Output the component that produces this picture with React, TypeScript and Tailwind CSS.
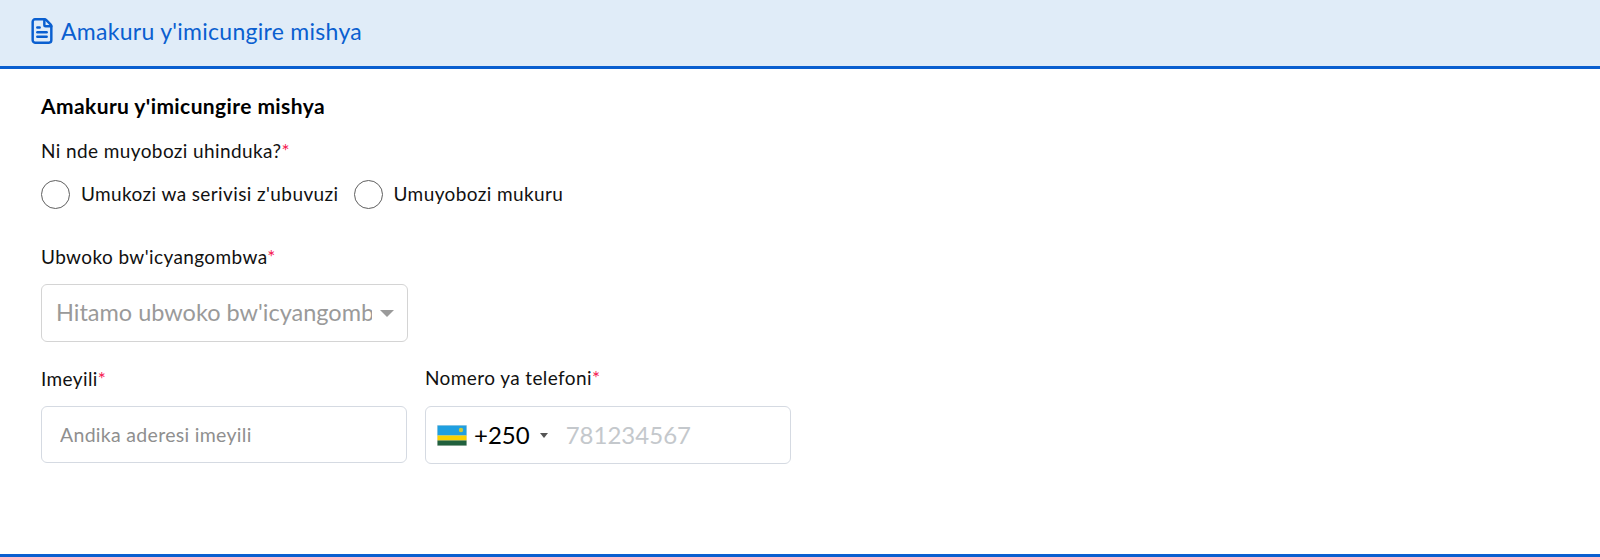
import { FileText } from "lucide-react";

function Required() {
  return <span className="text-[#f5164f]">*</span>;
}

function RwandaFlag() {
  return (
    <svg width="30" height="21" viewBox="0 0 30 21" className="shrink-0">
      <rect width="30" height="21" fill="#e5e5e5" />
      <rect x="0.5" y="0.5" width="29" height="10" fill="#1f9fe0" />
      <rect x="0.5" y="10.5" width="29" height="5" fill="#fad201" />
      <rect x="0.5" y="15.5" width="29" height="5" fill="#20603d" />
      <circle cx="24" cy="5" r="2.2" fill="#c9c93a" />
    </svg>
  );
}

function Radio({ label }: { label: string }) {
  return (
    <label className="flex items-center gap-[11px]">
      <span className="size-[29px] rounded-full border border-[#5f5f5f] bg-white" />
      <span>{label}</span>
    </label>
  );
}

export default function App() {
  return (
    <div
      className="h-[557px] flex flex-col bg-white text-[#111] text-[19px] tracking-[0.4px]"
      style={{ fontFamily: "Lato, 'Noto Sans', sans-serif" }}
    >
      {/* Header */}
      <header className="h-[69px] shrink-0 flex items-center gap-[5px] pl-[28px] pb-[4px] bg-[#e0ecf8] border-b-[3px] border-[#0a5fd0] text-[#0a5fd0]">
        <FileText size={28} strokeWidth={2.1} />
        <h1 className="text-[23px] leading-none tracking-[0.28px]">Amakuru y'imicungire mishya</h1>
      </header>

      {/* Form */}
      <main className="flex-1 border-b-[3px] border-[#0a5fd0] pl-[41px] pt-[26px]">
        <h2 className="text-[21px] leading-[22px] font-bold text-black">Amakuru y'imicungire mishya</h2>

        <p className="mt-[22px] leading-[24px]">
          Ni nde muyobozi uhinduka?
          <Required />
        </p>
        <div className="mt-[17px] flex gap-[15px]">
          <Radio label="Umukozi wa serivisi z'ubuvuzi" />
          <Radio label="Umuyobozi mukuru" />
        </div>

        <p className="mt-[36px] leading-[24px]">
          Ubwoko bw'icyangombwa
          <Required />
        </p>
        <div className="mt-[15px] w-[367px] h-[58px] flex items-center pl-[14px] pr-[13px] gap-[8px] rounded-[6px] border border-[#d4d4d4] text-[23.5px] tracking-normal text-[#9a9a9a]">
          <span className="flex-1 overflow-hidden whitespace-nowrap">Hitamo ubwoko bw'icyangombwa</span>
          <span className="w-0 h-0 border-x-[7px] border-x-transparent border-t-[7px] border-t-[#9a9a9a]" />
        </div>

        <div className="mt-[24px] flex gap-[18px]">
          <div className="w-[366px]">
            <p className="leading-[24px] mt-[1px]">
              Imeyili
              <Required />
            </p>
            <input
              placeholder="Andika aderesi imeyili"
              className="mt-[15px] w-full h-[57px] px-[18px] rounded-[6px] border border-[#d5dae2] text-[19.5px] tracking-[0.3px] outline-none placeholder:text-[#8f8f8f]"
            />
          </div>
          <div className="w-[366px]">
            <p className="leading-[24px]">
              Nomero ya telefoni
              <Required />
            </p>
            <div className="mt-[16px] h-[58px] flex items-center pl-[11px] rounded-[6px] border border-[#d5dae2] tracking-normal">
              <RwandaFlag />
              <span className="ml-[7px] text-[24px] text-black">+250</span>
              <span className="ml-[10px] w-0 h-0 border-x-[4px] border-x-transparent border-t-[5px] border-t-[#555]" />
              <span className="ml-[18px] text-[24px] text-[#c4c8cc]">781234567</span>
            </div>
          </div>
        </div>
      </main>
    </div>
  );
}
